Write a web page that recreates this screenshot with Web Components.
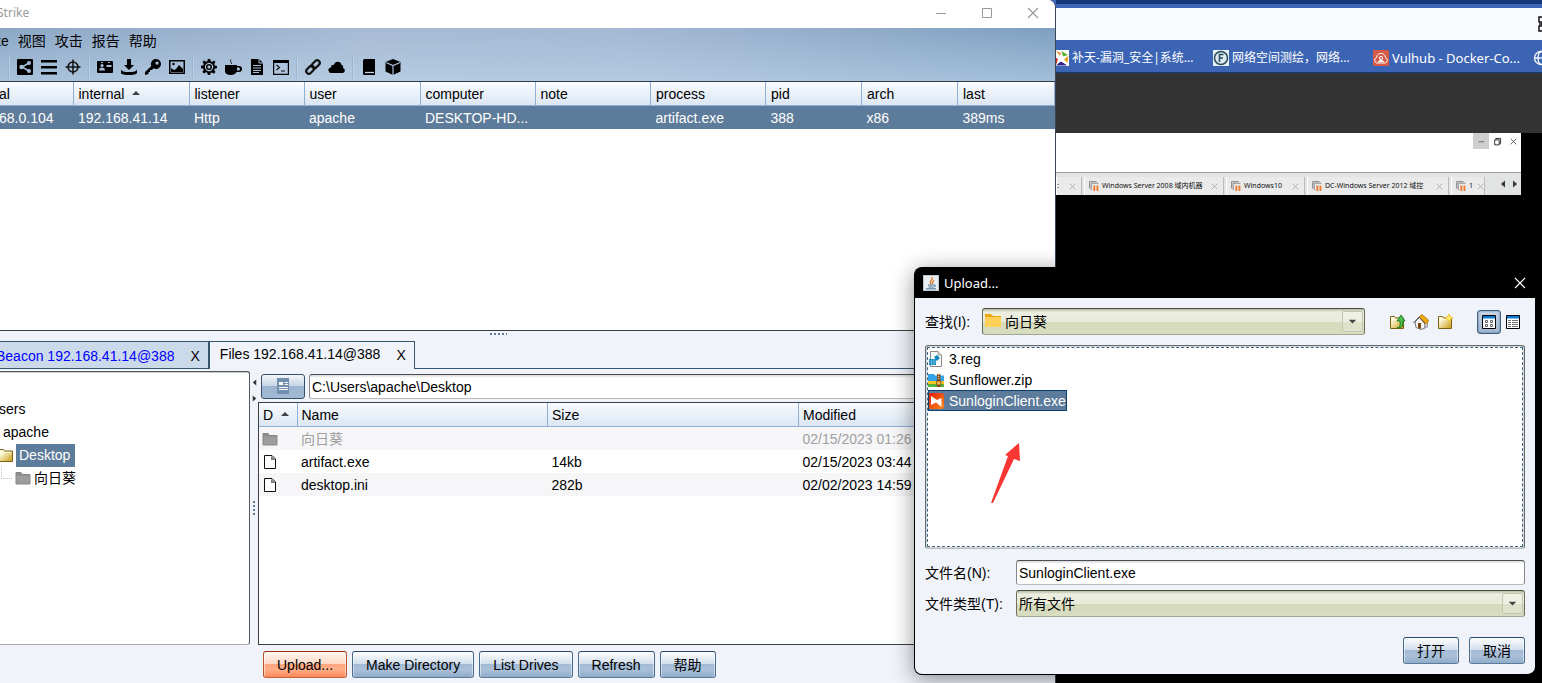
<!DOCTYPE html>
<html lang="zh-CN">
<head>
<meta charset="utf-8">
<meta name="viewport" content="width=device-width, initial-scale=1">
<title>Strike</title>
<style>
  html, body { margin: 0; min-height: 100%; background: #000; }
  body {
    --ui: "Liberation Sans", "Noto Sans CJK SC", sans-serif;
    --shell: "Noto Sans", "Noto Sans CJK SC", sans-serif;
    --panel: #f0f3fa;
    --select: #5d7b9a;
    --line: #3c3f44;
    font: 14px/23px var(--ui);
    color: #000;
  }
</style>
</head>
<body>
<desk-scene></desk-scene>

<script>
const define = (name, html, setup) => {
  const tpl = document.createElement('template');
  tpl.innerHTML = html;
  customElements.define(name, class extends HTMLElement {
    constructor() {
      super();
      this.attachShadow({ mode: 'open' }).append(tpl.content.cloneNode(true));
    }
    connectedCallback() { if (setup) setup(this, this.shadowRoot); }
  });
};

/* ---------- icons ---------- */
const folder = (a, b, c) => `<path d="M1 2.500h5l1.500 2H15v9.500H1z" fill="${a}" stroke="${c}"/><path d="M1.500 5.500h13v8h-13z" fill="${b}"/>`;
const gold = `<defs><linearGradient id="g" x2="1" y2="1"><stop offset="0.200" stop-color="#fffbe0"/><stop offset="1" stop-color="#c79a10"/></linearGradient></defs><path d="M1.500 2.500h4l1 1.500h8v10.500h-13z" fill="url(#g)" stroke="#7a6114"/><path d="M2.500 5.500h11" stroke="#fff8cf"/>`;
const icons = {
  share: '<path d="M1 0h14a1 1 0 0 1 1 1v14a1 1 0 0 1-1 1H1a1 1 0 0 1-1-1V1a1 1 0 0 1 1-1z"/><path d="M12 4L5 8l7 4" stroke="#a9bfd8" stroke-width="1.500" fill="none"/><g fill="#a9bfd8"><circle cx="4.500" cy="8" r="2.200"/><circle cx="12" cy="4" r="2"/><circle cx="12" cy="12" r="2"/></g>',
  bars: '<path d="M0 1h16v2.500H0zM0 7h16v2.500H0zM0 13h16v2.500H0z"/>',
  target: '<g fill="none" stroke="#111" stroke-width="1.500"><circle cx="8" cy="8" r="5"/><path d="M8 0.500v15M0.500 8h15"/></g>',
  id: '<path d="M1 2h14a1 1 0 0 1 1 1v10a1 1 0 0 1-1 1H1a1 1 0 0 1-1-1V3a1 1 0 0 1 1-1z"/><g fill="#a5bdd7"><circle cx="5" cy="6.500" r="1.600"/><path d="M2 11.500c0-4 6-4 6 0z"/><path d="M9.500 6h5v2h-5zM4 3h2v1H4zM11 3h2v1h-2z"/></g>',
  download: '<path d="M6 0h4v6h3L8 11 3 6h3z"/><path d="M0 10.500c1 2 3 2.500 8 2.500s7-.5 8-2.500V14c-1 2.700-15 2.700-16 0z"/>',
  key: '<path fill-rule="evenodd" d="M11 0a5 5 0 1 1-2.500 9.300L7 11H5v2H3.500v2L0 16v-3l6.300-6A5 5 0 0 1 11 0zm1 2.500a1.600 1.600 0 1 0 0.100 0z"/>',
  image: '<path fill-rule="evenodd" d="M0 1h16v14H0zM1.500 2.500v11h13v-11z"/><path d="M2 13V9l3 2 2-1 3-4 4 4v3z"/><circle cx="4.500" cy="5" r="1.200"/>',
  gear: '<path fill-rule="evenodd" d="M6.800 0h2.400l.5 2.300 1.300.6 2-1.300 1.500 1.500-1.300 2 .6 1.300 2.200.5v2.300l-2.300.6-.5 1.300 1.300 2-1.600 1.600-2-1.300-1.300.6L9.200 16H6.800l-.5-2.200-1.300-.6-2 1.300-1.600-1.600 1.300-2-.6-1.300L0 9.200V6.800l2.300-.5.5-1.300-1.300-2L3.100 1.500l2 1.300 1.300-.5zM8 3.800a4.200 4.200 0 1 0 .1 0z"/><circle cx="8" cy="8" r="2.300" fill="none" stroke="#111" stroke-width="1.600"/>',
  cup: '<path fill-rule="evenodd" d="M0 6h12v1h2a2.500 2.500 0 0 1 0 6h-2.500c-1 4-10.500 4-11.500 0zm12 2.500v3h1.500a1.500 1.500 0 0 0 0-3z"/><path d="M6 5c2-2-2-2 0-4.500" fill="none" stroke="#111"/>',
  file: '<path d="M2 0h8l4 4v12H2z"/><path d="M10 0v4h4M4 6.500h8M4 9h8M4 11.500h8M4 13.500h6" fill="none" stroke="#a9bfd8"/>',
  terminal: '<path fill-rule="evenodd" d="M0 1h16v15H0zM1.200 4v10.800h13.600V4z"/><path d="M3.500 6l3 2.500-3 2.500M8 12h4" fill="none" stroke="#111" stroke-width="1.200"/>',
  link: '<g fill="none" stroke="#111" stroke-width="2.200"><rect x="-4.500" y="-2.600" width="9" height="5.200" rx="2.600" transform="translate(5.200 10.800) rotate(-45)"/><rect x="-4.500" y="-2.600" width="9" height="5.200" rx="2.600" transform="translate(10.800 5.200) rotate(-45)"/></g>',
  cloud: '<path d="M2.500 14a2.800 2.800 0 0 1-.5-5.600C2 6 4 5.500 5 6c1-4.500 7-4 7.500 0C14 6 14.500 8 14 9a2.600 2.600 0 0 1 0 5z"/>',
  book: '<path d="M3 0h11v16H3.500A1.500 1.500 0 0 1 2 14V1.500z"/><path d="M4 13.500h9" stroke="#c5d4e6" stroke-width="1.300"/>',
  cube: '<path d="M8 0l7.500 3v9.500L8 16 .5 12.500V3z"/><path d="M1 3.500L8 6.500l7-3M8 6.500V16" fill="none" stroke="#a9bfd8" stroke-width="1.200"/>',
  edge: '<path d="M2 3h12v3H2zM2 8h12v5H2z"/>',
  up: '<path d="M4 10l4-4 4 4z" fill="#444"/>',
  graydir: folder('#8d8d8d', '#9c9c9c', '#858585'),
  dir: gold,
  yellowdir: '<path d="M0 1h6l2 2h8v4H0z" fill="#eba70c"/><path d="M0 4h16v10H0z" fill="#ffd058"/>',
  doc: '<path d="M2.500 1.500h7.500l3.500 3.500v9.500h-11z" fill="#fff" stroke="#111" stroke-linejoin="round"/><path d="M9 2l4.500 4h-4.500z" fill="#777"/>',
  updir: gold + '<path d="M8 14c4-1 3-4 3-7H8l4-6 4 6h-2c0 4 0 7-6 7z" fill="#4bc04a" stroke="#136d18" stroke-width="0.800"/>',
  home: '<path d="M2 8l5-5 5 5v6l-4 1.500-5-2z" fill="#f4f4f4" stroke="#777"/><path d="M12 8l2.500-1v6L12 14z" fill="#ccc" stroke="#777" stroke-width="0.600"/><path d="M5 9h3v6l-3-1z" fill="#7c4614"/><path d="M6 3l3-2.500L15.500 6l-1 3-3 .5z" fill="#f0a80c" stroke="#9f6500" stroke-width="0.700"/><path d="M.5 9L6 3l6 6" fill="none" stroke="#555"/>',
  newdir: gold + '<path d="M12 0l1.500 2.500L16 4l-2.500 1.500L12 8l-1.500-2.500L8 4l2.500-1.500z" fill="#ffe65a" stroke="#efa800" stroke-width="0.600"/>',
  grid: '<path d="M1.500 1.500h13v13h-13z" fill="#fff" stroke="#000"/><path d="M2 2h12v2.500H2z" fill="#087ad0"/><g fill="none" stroke="#666"><path d="M4.500 6.500h2v2h-2zM9.500 6.500h2v2h-2zM4.500 10.500h2v2h-2zM9.500 10.500h2v2h-2z"/></g>',
  list: '<path d="M1.500 1.500h13v13h-13z" fill="#fff" stroke="#000"/><path d="M2 2h12v2.500H2z" fill="#087ad0"/><path d="M3 6.500h10M3 8.500h10M3 10.500h10M3 12.500h10" stroke="#777" stroke-dasharray="3 1 6 0"/>',
  reg: '<path d="M2.500.5H10l3.500 3.500v11.500h-11z" fill="#fdfdfd" stroke="#888"/><path d="M10 .5V4h3.500" fill="#ddd" stroke="#999"/><path d="M1 8h7v6H1zM6 6l3-2 3 3-3 3z" fill="#0e86bd"/><path d="M3.500 8v6M6 8v6M1 10h7M1 12h7" stroke="#8fd2ee" stroke-width="0.500"/>',
  zip: '<path d="M0 2h6l1 1.500h9V9H0z" fill="#35a3ea"/><path d="M0 9h16v3H0z" fill="#ffc428"/><path d="M0 12h16v3H0z" fill="#56b43a"/><path d="M9 2h3.500v13H9z" fill="#8c4f1d"/><path d="M8.500 9h4.500v4H8.500z" fill="#e9b64c" stroke="#5a3412" stroke-width="0.600"/><path d="M10.700 2v6" stroke="#f3d9a6" stroke-dasharray="1 1"/>',
  sun: '<defs><linearGradient id="s" x2="1" y2="1"><stop stop-color="#e01808"/><stop offset="1" stop-color="#ff8a18"/></linearGradient></defs><rect width="16" height="16" rx="3" fill="url(#s)"/><path d="M3 3l6 4 4.500-2v9L8 9.500 3 12z" fill="#fff"/>',
  java: '<rect x=".5" y=".5" width="15" height="15" fill="#e9eef3" stroke="#b9c5d0"/><path d="M8.500 9c-4-3 2.500-3.500 .5-7M9.500 9c-1-2 2-2.500 1-4" fill="none" stroke="#e8731c" stroke-width="1.200"/><path d="M5 10h6M5.500 12h5M3 13.800h10M11 10c2-.5 2 1.500 0 2" fill="none" stroke="#44708f"/>',
  details: '<path d="M2 0h12v16H2z" fill="#7190b0"/><path d="M4 4h4v3H4zM9.500 4H13v1H9.500zM9.500 6H13v1H9.500zM4 9h9v1H4zM4 11h9v1H4z" fill="#fff"/>',
  star: '<path d="M0 0h16v16H0z" fill="#fff"/><path d="M3 1l5 2v4z" fill="#f08020"/><path d="M8.500 1L15 5l-5 1.500z" fill="#58b030"/><path d="M15.500 6l-1 7-4-4z" fill="#e8a020"/><path d="M8 11l6 4.500H3z" fill="#31218e"/><path d="M1 5l4 4-2 6z" fill="#d02020"/><path d="M8 3l1.600 3.600 4 .4-3 2.700.9 3.900L8 11.600l-3.500 2 .9-3.900-3-2.700 4-.4z" fill="#fff"/>',
  fofa: '<path d="M0 0h16v16H0z" fill="#e8f1f4"/><circle cx="8" cy="8" r="6.500" fill="#dceaf0" stroke="#254d60" stroke-width="1.500"/><path d="M6.500 12V4.500h4M6.500 8H10" fill="none" stroke="#254d60" stroke-width="1.500"/>',
  vulhub: '<rect width="16" height="16" rx="1" fill="#d75a46"/><path d="M3.500 13a3 3 0 0 1 0-5.500C4 2 12 2 12.500 7.500a3 3 0 0 1 0 5.500z" fill="none" stroke="#fff"/><circle cx="8" cy="8" r="1.600" fill="none" stroke="#fff"/><path d="M4.500 12L8 9l3.500 3z" fill="#fff"/>',
  globe: '<g fill="none" stroke="#fff" stroke-width="1.300"><circle cx="8" cy="8" r="6.500"/><ellipse cx="8" cy="8" rx="3" ry="6.500"/><path d="M1.500 8h13"/></g>',
  vm: '<path d="M1 12V1h11M3.500 14.500v-11H15" fill="none" stroke="#777" stroke-width="1.400"/><path d="M7 7h3v9H7zM12 7h3v9h-3z" fill="#f07a30"/>',
  x: '<path d="M3 3l10 10M13 3L3 13" fill="none" stroke="currentColor" stroke-width="1.200"/>',
  min: '<path d="M3 8.500h10" stroke="currentColor"/>',
  max: '<path d="M3.500 3.500h9v9h-9z" fill="none" stroke="currentColor"/>',
  restore: '<path d="M3 5h8v9H3zM5 5V2.500h8.500V12H11" fill="none" stroke="currentColor" stroke-width="1.600"/>',
  left: '<path d="M12 1v14L4 8z" fill="#333"/>',
  right: '<path d="M4 1v14l8-7z" fill="#333"/>',
  drop: '<path d="M4 6h8l-4 4z" fill="#444"/>',
  qr: '<path d="M1 1h5v5H1zM10 1h5v5h-5zM1 10h5v5H1zM10 10h5v5h-5zM4 6v4M1 8h5" fill="none" stroke="#111" stroke-width="1.500"/>'
};
define('ui-icon', `<style>
  :host { display: block; flex: none; width: 16px; height: 16px; }
  svg { display: block; width: 100%; height: 100%; overflow: visible; }
</style><svg viewBox="0 0 16 16" aria-hidden="true"></svg>`, (el, root) => {
  root.querySelector('svg').innerHTML = icons[el.getAttribute('name')];
});

/* ---------- controls ---------- */
define('ui-button', `<style>
  :host { display: block; }
  button {
    display: block; height: 27px; padding: 1px 13px 0; font: inherit; color: #000; white-space: nowrap;
    border: 1px solid; border-color: #2c4a68 #486a8c #5c7a99; border-radius: 3px;
    background: linear-gradient(#fdfefe, #cfdceb 50%, #a3bad6 50%, #abc1d9 70%, #8fabc9);
    box-shadow: inset 1px 0 #ffffff80, inset -1px 0 #ffffff80;
  }
  :host([hot]) button {
    border-color: #9a2e0c #b8542c #c2603a;
    background: linear-gradient(#fff6f1, #ffd6c2 50%, #ffa680 50%, #ffae88 70%, #ff8757);
  }
</style><button type="button"><slot></slot></button>`);

define('ui-combo', `<style>
  :host { display: block; position: relative; min-width: 0; }
  select {
    appearance: none; display: block; box-sizing: border-box; width: 100%; height: 27px;
    padding: 2px 30px 0 2px; font: inherit; color: #000; border: 1px solid;
    border-color: #4c4d3e #6d6f5d #a4a694; border-radius: 3px;
    background: linear-gradient(#b5b8a1, #eceee0 3px, #e8ebda 50%, #d6dabb 50%, #d8dcc0 24px);
  }
  :host([lead]) select { padding-left: 22px; }
  ui-icon { position: absolute; top: 5px; }
  .lead { left: 3px; }
  .arrow { right: 2px; top: 3px; width: 21px; height: 21px; border: 1px solid #c4c7af; border-radius: 2px; box-sizing: border-box; background: #ffffff38; padding: 2px; }
  :host(:not([lead])) .lead { display: none; }
</style><select><option></option></select><ui-icon class="lead" name="yellowdir"></ui-icon><ui-icon class="arrow" name="drop"></ui-icon>`,
(el, root) => {
  root.querySelector('option').textContent = el.getAttribute('value');
  root.querySelector('select').setAttribute('aria-label', el.getAttribute('label'));
});

define('ui-field', `<style>
  :host { display: block; min-width: 0; }
  input {
    display: block; box-sizing: border-box; width: 100%; height: 25px; padding: 1px 2px 0; font: inherit; color: #000;
    border: 1px solid; border-color: #4b4d50 #85878a #b8babd; border-radius: 3px; background: linear-gradient(#d8d8d8, #fff 3px);
  }
</style><input type="text">`, (el, root) => {
  const input = root.querySelector('input');
  input.value = el.getAttribute('value');
  input.setAttribute('aria-label', el.getAttribute('label'));
});

/* ---------- background browser and virtual machine window ---------- */
define('book-mark', `<style>
  :host { display: block; flex: none; width: 160px; }
  a { display: flex; align-items: center; gap: 3px; height: 32px; padding-top: 2px; color: #fff; text-decoration: none; font: 13px/20px var(--shell); white-space: nowrap; }
  :host([lang]) a { font-size: 12px; }
</style><a href="#"><slot name="icon"></slot><slot></slot></a>`);

define('vm-tab', `<style>
  :host { display: flex; align-items: center; gap: 3px; flex: none; box-sizing: border-box; height: 18px; padding: 0 4px; border-left: 1px solid #fff; border-right: 1px solid #bcbcbc; background: #eaeaea; margin-right: 2px; font: 7px/12px var(--shell); color: #111; white-space: nowrap; overflow: hidden; }
  ui-icon { width: 10px; height: 10px; }
  .x { width: 9px; height: 9px; color: #999; margin-left: auto; }
  :host([bare]) .vm { display: none; }
</style><ui-icon class="vm" name="vm"></ui-icon><span><slot></slot></span><ui-icon class="x" name="x"></ui-icon>`);

define('back-drop', `<style>
  :host { display: flex; flex-direction: column; min-width: 0; overflow: hidden; background: #000; }
  .strip { height: 4px; background: #16387a; border-bottom: 4px solid #3d66b8; }
  .bar { display: flex; align-items: center; justify-content: flex-end; height: 32px; background: #fafbff; overflow: hidden; }
  .bar ui-icon { margin-right: -12px; }
  .marks { display: flex; height: 32px; margin-left: -3px; background: #3c64b4; border-bottom: 1px solid #173a7d; overflow: hidden; }
  .page { height: 60px; background: #333; }
  .vm { margin-right: 21px; height: 62px; background: #fff; display: flex; flex-direction: column; justify-content: space-between; }
  .win { display: flex; justify-content: flex-end; color: #222; }
  .win span { display: grid; place-items: center; width: 16px; height: 16px; }
  .win span:first-child { background: #cfcfcf; }
  .win ui-icon { width: 9px; height: 9px; }
  .tabs { display: flex; align-items: flex-end; box-sizing: border-box; height: 23px; border-top: 1px solid #9c9c9c; background: #e2e3e3; }
  .tabs .nav { display: flex; gap: 4px; margin: 0 2px 7px auto; }
  .nav ui-icon { width: 8px; height: 8px; }
</style>
<div class="strip"></div>
<div class="bar"><ui-icon name="qr"></ui-icon></div>
<div class="marks">
  <book-mark lang="zh"><ui-icon slot="icon" name="star"></ui-icon>补天-漏洞_安全|系统...</book-mark>
  <book-mark lang="zh"><ui-icon slot="icon" name="fofa"></ui-icon>网络空间测绘，网络...</book-mark>
  <book-mark><ui-icon slot="icon" name="vulhub"></ui-icon>Vulhub - Docker-Co...</book-mark>
  <book-mark><ui-icon slot="icon" name="globe"></ui-icon></book-mark>
</div>
<div class="page"></div>
<div class="vm">
  <div class="win"><span><ui-icon name="min"></ui-icon></span><span><ui-icon name="restore"></ui-icon></span><span><ui-icon name="x"></ui-icon></span></div>
  <div class="tabs">
    <vm-tab bare style="width:26px;padding-left:0">:</vm-tab>
    <vm-tab style="width:140px">Windows Server 2008 域内机器</vm-tab>
    <vm-tab style="width:79px">Windows10</vm-tab>
    <vm-tab style="width:142px">DC-Windows Server 2012 域控</vm-tab>
    <vm-tab style="width:34px">1</vm-tab>
    <div class="nav"><ui-icon name="left"></ui-icon><ui-icon name="right"></ui-icon></div>
  </div>
</div>`);

/* ---------- main window ---------- */
const tableCss = `
  table { width: 100%; border-collapse: collapse; table-layout: fixed; }
  th, td { box-sizing: border-box; height: 23px; padding: 1px 4px 0; text-align: left; font-weight: normal; line-height: 21px; white-space: nowrap; overflow: hidden; }
  td { padding-top: 2px; }
  th { background: linear-gradient(#f9fbfe, #dbe6f3); border-bottom: 1px solid #8fb0d4; border-right: 1px solid #8fb0d4; }
  th ui-icon { display: inline-block; vertical-align: -2px; }
  td ui-icon { margin-top: -2px; }`;

define('session-table', `<style>
  :host { display: block; background: #fff; overflow: hidden; }
  ${tableCss}
  th, td { padding-left: 5px; line-height: 22px; }
  td { padding-top: 1px; background: var(--select); color: #fff; }
  tr > :first-child { padding-left: 7px; }
</style>
<table>
  <colgroup><col style="width:81px"><col style="width:116px"><col style="width:115px"><col style="width:116px"><col style="width:115px"><col><col style="width:115px"><col style="width:96px"><col style="width:96px"><col style="width:97px"></colgroup>
  <thead><tr><th>al</th><th>internal <ui-icon name="up"></ui-icon></th><th>listener</th><th>user</th><th>computer</th><th>note</th><th>process</th><th>pid</th><th>arch</th><th>last</th></tr></thead>
  <tbody><tr><td>68.0.104</td><td>192.168.41.14</td><td>Http</td><td>apache</td><td>DESKTOP-HD...</td><td></td><td>artifact.exe</td><td>388</td><td>x86</td><td>389ms</td></tr></tbody>
</table>`);

define('file-table', `<style>
  :host { display: block; background: #fff; border: 1px solid var(--line); overflow: hidden; }
  ${tableCss}
  th { height: 24px; padding-top: 2px; }
  tbody tr:nth-child(odd) { background: #f6f6f8; }
  .off { color: #a0a0a0; }
  td:first-child { padding-left: 3px; }
</style>
<table>
  <colgroup><col style="width:38px"><col><col style="width:251px"><col style="width:255px"></colgroup>
  <thead><tr><th>D <ui-icon name="up"></ui-icon></th><th>Name</th><th>Size</th><th>Modified</th></tr></thead>
  <tbody>
    <tr class="off"><td><ui-icon name="graydir"></ui-icon></td><td>向日葵</td><td></td><td>02/15/2023 01:26</td></tr>
    <tr><td><ui-icon name="doc"></ui-icon></td><td>artifact.exe</td><td>14kb</td><td>02/15/2023 03:44</td></tr>
    <tr><td><ui-icon name="doc"></ui-icon></td><td>desktop.ini</td><td>282b</td><td>02/02/2023 14:59</td></tr>
  </tbody>
</table>`);

define('dir-tree', `<style>
  :host { display: block; box-sizing: border-box; background: #fff; border: 1px solid #55585c; border-bottom-color: #a9abae; border-radius: 3px; overflow: hidden; padding-top: 26px; box-shadow: inset 0 1px #c8cacc; }
  ul { list-style: none; margin: 0; padding: 0; }
  li { display: flex; align-items: center; gap: 2px; height: 23px; }
  .l1 { padding-left: 6px; } .l2 { padding-left: 10px; } .l3 { padding-left: 5px; }
  .l4 { padding-left: 8px; gap: 3px; }
  .l4 i { width: 10px; height: 12px; margin-bottom: 12px; border: dotted #b4c0cc; border-width: 0 0 1px 1px; }
  b { font-weight: normal; padding: 0 5px 0 3px; background: var(--select); color: #fff; }
</style>
<ul><li class="l1">sers</li><li class="l2">apache</li><li class="l3"><ui-icon name="dir"></ui-icon><b>Desktop</b></li><li class="l4"><i></i><ui-icon name="graydir"></ui-icon>向日葵</li></ul>`);

define('tool-bar', `<style>
  :host { display: flex; align-items: center; height: 24px; }
  span { display: grid; place-items: center; width: 24px; height: 24px; }
  .cut { width: 13px; justify-items: start; }
  .cut ui-icon { width: 9px; height: 9px; }
  hr { width: 2px; height: 24px; margin: 0 3px; border: 0; background: linear-gradient(90deg, #7f9bbb, #dce8f5); opacity: .7; }
</style>`, (el, root) => {
  const groups = [['edge'], ['share', 'bars', 'target'], ['id', 'download', 'key', 'image'], ['gear', 'cup', 'file', 'terminal'], ['link', 'cloud'], ['book', 'cube']];
  const html = groups.map(g => g.map(n => `<span class="${n === 'edge' ? 'cut' : ''}"><ui-icon name="${n}"></ui-icon></span>`).join('')).join('<hr>');
  root.append(document.createRange().createContextualFragment(html));
});

define('strike-window', `<style>
  :host { display: flex; flex-direction: column; min-width: 0; box-sizing: border-box; margin-left: -8px; background: var(--panel); border-right: 1px solid #3b4654; border-top-right-radius: 8px; overflow: hidden; }
  .title { display: flex; align-items: center; height: 28px; padding: 0 14px 3px 5px; box-sizing: border-box; background: #fff; color: #999; font: 12px/20px var(--shell); }
  .title span { flex: 1; }
  .title ui-icon { margin-left: 30px; }
  .head { height: 53px; border-bottom: 1px solid #333c46; background: linear-gradient(#c4dcf000, #c4dcf080), linear-gradient(90deg, #8aa6c4, #a6bad3 35%, #a3b8d2 60%, #7f9fc0); }
  nav { display: flex; gap: 9px; height: 27px; padding-left: 2px; line-height: 27px; }
  nav a { color: #000; text-decoration: none; }
  session-table { flex: 248 1 0; }
  .lower { flex: 353 1 0; display: flex; flex-direction: column; box-sizing: border-box; border-top: 1px solid var(--line); }
  .grip { height: 4px; width: 18px; margin: 1px auto 5px 497px; background: radial-gradient(circle, #5f7a99 1px, transparent 1px) 0 0 / 4px 4px; }
  .tabs { display: flex; height: 28px; line-height: 25px; }
  .tab { box-sizing: border-box; display: flex; gap: 16px; border: 1px solid #365570; border-width: 1px 1px 0 0; padding: 0 8px 0 10px; white-space: nowrap; }
  .tab:first-child { padding: 2px 8px 0 4px; color: #00f; background: #cbdaeb; border-width: 1px 2px 1px 0; }
  .tab button { all: unset; color: #000; }
  .rest { flex: 1; border-bottom: 1px solid #365570; }
  .split { flex: 1; display: grid; grid-template-columns: 258px 8px minmax(0, 1fr); min-height: 0; padding: 2px 0 0; }
  .bar { display: flex; flex-direction: column; align-items: center; padding-top: 8px; }
  .bar ui-icon { width: 7px; height: 7px; margin-bottom: 9px; }
  .bar i { width: 5px; height: 17px; margin-top: 89px; background: radial-gradient(circle, #5f7a99 1px, transparent 1px) 0 0 / 4px 4px; }
  .files { display: flex; flex-direction: column; }
  .path { display: flex; gap: 4px; padding: 3px 0 3px 3px; }
  .path button { display: grid; place-items: center; width: 44px; height: 25px; padding: 0; border: 1px solid #33516f; border-radius: 3px; background: linear-gradient(#f2f6fa, #c4d3e4 50%, #9db5d0 50%, #a3b9d4); }
  .path ui-field { flex: 1; }
  file-table { flex: 1; }
  .actions { display: flex; gap: 5px; padding: 6px 0 5px 271px; }
</style>
<div class="title"><span>Strike</span><ui-icon name="min"></ui-icon><ui-icon name="max"></ui-icon><ui-icon name="x"></ui-icon></div>
<div class="head">
  <nav><a href="#">ke</a><a href="#">视图</a><a href="#">攻击</a><a href="#">报告</a><a href="#">帮助</a></nav>
  <tool-bar></tool-bar>
</div>
<session-table></session-table>
<div class="lower">
  <div class="grip"></div>
  <div class="tabs"><div class="tab">Beacon 192.168.41.14@388<button>X</button></div><div class="tab">Files 192.168.41.14@388<button>X</button></div><div class="rest"></div></div>
  <div class="split">
    <dir-tree></dir-tree>
    <div class="bar"><ui-icon name="left"></ui-icon><ui-icon name="right"></ui-icon><i></i></div>
    <div class="files">
      <div class="path"><button type="button" aria-label="目录"><ui-icon name="details"></ui-icon></button><ui-field label="路径" value="C:\\Users\\apache\\Desktop"></ui-field></div>
      <file-table></file-table>
    </div>
  </div>
  <div class="actions"><ui-button hot>Upload...</ui-button><ui-button>Make Directory</ui-button><ui-button>List Drives</ui-button><ui-button>Refresh</ui-button><ui-button>帮助</ui-button></div>
</div>`);

/* ---------- upload dialog ---------- */
define('upload-dialog', `<style>
  :host { display: block; box-sizing: border-box; border: 1px solid #000; border-right: 0; border-radius: 8px; background: #000; overflow: hidden; box-shadow: 0 4px 22px #00000070; }
  header { display: flex; align-items: center; gap: 5px; height: 30px; padding: 0 7px 1px 8px; box-sizing: border-box; background: #000; color: #fff; font: 13px/20px var(--shell); }
  header span { flex: 1; }
  .body { padding: 10px; background: var(--panel); }
  .row { display: flex; align-items: center; }
  .row label { flex: none; width: 91px; padding-top: 2px; }
  .row > :nth-child(2) { flex: 1; }
  .row.look label { width: 57px; }
  .tools { display: flex; align-items: center; gap: 8px; margin: 0 4px 0 24px; }
  .tools button { all: unset; display: grid; place-items: center; height: 24px; }
  .tools .on { box-sizing: border-box; width: 24px; margin-left: 16px; margin-right: -4px; border: 1px solid #3e5f80; border-radius: 3px; background: linear-gradient(#c9d6e5, #9fb5cf); box-shadow: inset 0 0 2px #46698c; }
  .list { box-sizing: border-box; height: 204px; margin: 10px 0 11px; padding: 1px; background: #fff; border: 1px solid #66696c; border-bottom-color: #b9bbbe; border-radius: 3px; box-shadow: inset 0 0 0 1px #d5d7d9; position: relative; }
  ul { list-style: none; margin: 0; padding: 0; box-sizing: border-box; height: 100%; border: 1px dashed #3f6384; }
  li { display: flex; width: max-content; box-sizing: border-box; align-items: center; gap: 5px; height: 21px; padding: 1px 1px 0 0; line-height: 20px; }
  li.on { background: var(--select); color: #fff; outline: 1px solid #0c3f6e; outline-offset: -1px; }
  .mark { position: absolute; left: 63px; top: 96px; width: 34px; height: 64px; }
  .type { margin-top: 5px; }
  .end { display: flex; justify-content: flex-end; gap: 10px; margin-top: 20px; }
</style>
<header><ui-icon name="java"></ui-icon><span>Upload...</span><ui-icon name="x"></ui-icon></header>
<div class="body">
  <div class="row look"><label>查找(I):</label><ui-combo lead label="查找" value="向日葵"></ui-combo>
    <div class="tools"><button aria-label="向上"><ui-icon name="updir"></ui-icon></button><button aria-label="主目录"><ui-icon name="home"></ui-icon></button><button aria-label="新建"><ui-icon name="newdir"></ui-icon></button><button class="on" aria-label="列表"><ui-icon name="grid"></ui-icon></button><button aria-label="详细"><ui-icon name="list"></ui-icon></button></div>
  </div>
  <div class="list"><ul>
    <li><ui-icon name="reg"></ui-icon>3.reg</li>
    <li><ui-icon name="zip"></ui-icon>Sunflower.zip</li>
    <li class="on"><ui-icon name="sun"></ui-icon>SunloginClient.exe</li>
  </ul>
  <svg class="mark" viewBox="0 0 34 64" aria-hidden="true"><path d="M30 1l1 18-6-2L4 61H2l17-47-3-1z" fill="#fb3733"/></svg></div>
  <div class="row"><label>文件名(N):</label><ui-field label="文件名" value="SunloginClient.exe"></ui-field></div>
  <div class="row type"><label>文件类型(T):</label><ui-combo label="文件类型" value="所有文件"></ui-combo></div>
  <div class="end"><ui-button>打开</ui-button><ui-button>取消</ui-button></div>
</div>`);

define('desk-scene', `<style>
  :host { display: grid; grid-template-columns: minmax(0, 1fr) 486px; min-height: 100vh; position: relative; overflow: hidden; background: linear-gradient(#3d66b8 20px, #333 100px); }
  upload-dialog { position: absolute; top: 267px; right: 7px; width: 621px; }
</style>
<strike-window></strike-window>
<back-drop></back-drop>
<upload-dialog></upload-dialog>`);
</script>
</body>
</html>
